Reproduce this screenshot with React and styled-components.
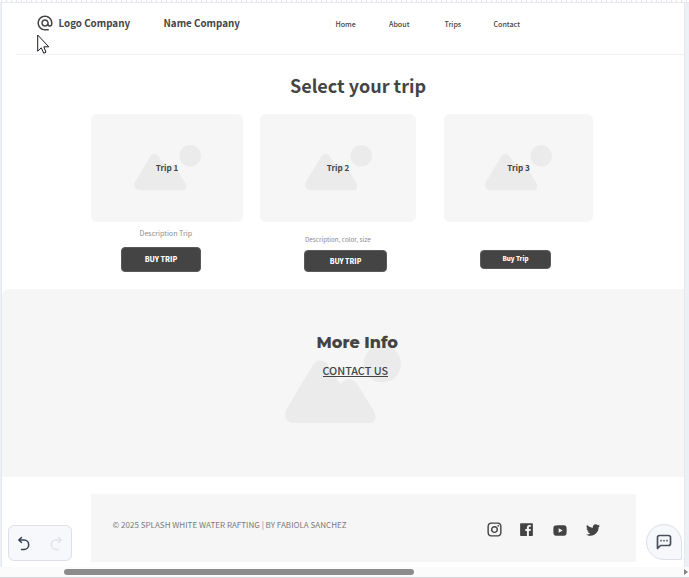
import React from "react";
import styled, { createGlobalStyle, css } from "styled-components";
import { MdAlternateEmail } from "react-icons/md";
import { RiInstagramLine, RiFacebookBoxFill, RiYoutubeFill } from "react-icons/ri";
import { FaTwitter } from "react-icons/fa";

const Global = createGlobalStyle`
  * { box-sizing: border-box; }
  body { margin: 0; overflow: hidden; font-family: "Noto Sans CJK SC", sans-serif; color: #444; }
`;

const Editor = styled.div`
  position: relative;
  width: 689px;
  height: 578px;
  display: grid;
  grid-template-rows: 3px 564px 11px;
  background: #fff;
`;

const Ruler = styled.div`
  border-bottom: 1px solid #e6e6ee;
  background: repeating-linear-gradient(90deg, #fff 0 1px, #e6e6ee 1px 2px, #fff 2px 5px);
`;

const Workspace = styled.div`
  display: grid;
  grid-template-columns: 2px 682px 5px;
  min-height: 0;
`;

const Gutter = styled.div`
  background: #edf0f6;
  border-${(p) => p.$edge}: 1px solid #e4e7ee;
`;

const Page = styled.main`
  display: flex;
  flex-direction: column;
  min-width: 0;
`;

const text = css`
  display: block;
  white-space: nowrap;
  font-size: ${(p) => p.$size}px;
  line-height: 16px;
  letter-spacing: ${(p) => p.$track || 0}px;
`;

const Header = styled.header`
  display: flex;
  align-items: flex-start;
  height: 52px;
  margin-left: 14px;
  padding: 12px 0 0 20px;
  border-bottom: 1px solid #f1f1f1;
`;

const Brand = styled.strong`
  ${text}
  width: ${(p) => p.$width}px;
`;

const AtIcon = styled(MdAlternateEmail)`
  flex: none;
  width: 18px;
  height: 18px;
  margin: -1px 4.5px 0 0;
`;

const Nav = styled.nav`
  display: grid;
  grid-template-columns: 53.5px 55.5px 49px 40px;
  padding-top: 1px;
`;

const NavLink = styled.a`
  ${text}
  font-weight: 500;
`;

const Title = styled.h1`
  ${text}
  margin: 15px 0 0 288px;
  line-height: 30px;
  font-weight: 700;
`;

const Trips = styled.section`
  display: grid;
  grid-template-columns: 152px 156px 149px;
  column-gap: 17px;
  height: 175px;
  margin: 14px 0 0 89px;
`;

const Trip = styled.article`
  display: flex;
  flex-direction: column;
  margin-left: ${(p) => p.$indent}px;
  width: ${(p) => p.$width}px;
`;

const Picture = styled.div`
  display: grid;
  place-items: center;
  height: 107.5px;
  border-radius: 6px;
  background: #f6f6f6;
  > * { grid-area: 1 / 1; }
`;

const Landscape = styled.svg`
  display: block;
  width: ${(p) => p.$width}px;
  fill: #ebebeb;
`;

const TripName = styled.strong`
  ${text}
`;

const Description = styled.p`
  ${text}
  height: 16px;
  margin: ${(p) => p.$top}px 0 0 ${(p) => p.$left}px;
  color: #8b8b8b;
`;

const BuyButton = styled.button`
  ${text}
  width: ${(p) => p.$width}px;
  height: ${(p) => p.$height}px;
  margin: ${(p) => p.$top}px 0 0 ${(p) => p.$left}px;
  padding: 0 0 ${(p) => p.$lift || 0}px;
  border: 1px solid #5a5a5a;
  border-radius: 4px;
  background: #444;
  color: #fff;
  font-family: inherit;
  font-weight: 900;
`;

const MoreInfo = styled.section`
  display: grid;
  grid-template-columns: 283.5px 1fr;
  grid-template-rows: 188px;
  border-top-left-radius: 8px;
  background: #f6f6f6;
  > * { grid-row: 1; }
`;

const InfoArt = styled(Landscape)`
  grid-column: 2;
  margin: 55.5px 0 0 -0.5px;
`;

const InfoText = styled.div`
  grid-column: 2;
  display: flex;
  flex-direction: column;
  align-items: flex-start;
  padding: 44px 0 0 31px;
`;

const InfoTitle = styled.h2`
  ${text}
  margin: 0;
  line-height: 20px;
  font-family: Montserrat, Inter, sans-serif;
  font-weight: 800;
`;

const ContactLink = styled.a`
  ${text}
  margin: 9px 0 0 6px;
  height: 15px;
  border-bottom: 1px solid #444;
  font-weight: 500;
`;

const Footer = styled.footer`
  display: flex;
  justify-content: space-between;
  width: 545px;
  height: 68px;
  margin: 17px 0 0 89px;
  padding: 23px 35px 0 21.5px;
  background: #f6f6f6;
`;

const Copyright = styled.p`
  ${text}
  margin: 0;
  color: #7b7b7b;
`;

const Social = styled.div`
  display: flex;
  gap: 15px;
  padding-top: 4px;
  svg { width: 17px; height: 17px; }
  svg:nth-child(3) { width: 16px; margin: 1px 1px 0 2px; }
  svg:nth-child(4) { width: 14px; height: 16px; margin: 1px 1px 0 2px; }
`;

const ScrollTrack = styled.div`
  display: flex;
  justify-content: space-between;
  align-items: center;
  padding-left: 64px;
  border-bottom: 1px solid #d2d8d8;
  background: #fbfbfb;
`;

const Thumb = styled.div`
  width: 350px;
  height: 6px;
  border-radius: 3px;
  background: #8b8b8b;
`;

const ScrollArrow = styled.svg`
  width: 6px;
  height: 8px;
  fill: #858585;
`;

const History = styled.div`
  position: absolute;
  left: 8px;
  top: 525px;
  display: flex;
  align-items: center;
  justify-content: space-between;
  width: 64px;
  height: 36px;
  padding: 2px 8px 0;
  border: 1px solid #dedfe9;
  border-radius: 6px;
  background: #f7f8fb;
`;

const HistoryIcon = styled.svg`
  width: 14px;
  height: 16px;
  fill: none;
  stroke: ${(p) => (p.$muted ? "#e0e3e9" : "#364152")};
  stroke-width: 1.5;
  stroke-linecap: round;
  stroke-linejoin: round;
`;

const ChatButton = styled.button`
  position: absolute;
  left: 646px;
  top: 524px;
  display: grid;
  place-items: center;
  width: 36px;
  height: 36px;
  padding: 0;
  border: 1px solid #dcdfe7;
  border-radius: 18px 18px 2px 18px;
  background: #f7f8fb;
`;

const Cursor = styled.svg`
  position: absolute;
  left: 37px;
  top: 34px;
  width: 13px;
  height: 21px;
`;

function Mountains({ as: Art = Landscape, width }) {
  return (
    <Art $width={width} viewBox="0 0 116.2 79">
      <circle cx="97.4" cy="18.8" r="18.7" />
      <path d="M11 78.6C1.5 78.6-2 71 2 63.5L27 21.5Q30.5 15.6 35.5 15.6T44 21.5L55.6 39.3Q59.5 34.2 64.2 34.2T72 38.5L89 66Q94.5 78.6 82 78.6Z" />
    </Art>
  );
}

const trips = [
  { name: "Trip 1", width: 152, indent: 0, desc: { text: "Description Trip", $size: 7.1, $top: 3.5, $left: 48.5 },
    buy: { text: "BUY TRIP", $size: 7, $width: 80, $height: 25, $top: 6, $left: 30, $lift: 1 } },
  { name: "Trip 2", width: 156, indent: 0, desc: { text: "Description, color, size", $size: 6.3, $top: 10.5, $left: 45 },
    buy: { text: "BUY TRIP", $size: 6.8, $width: 83, $height: 22, $top: 2, $left: 44 } },
  { name: "Trip 3", width: 149, indent: 11, desc: { text: "", $size: 7, $top: 10.5, $left: 0 },
    buy: { text: "Buy Trip", $size: 6.2, $width: 71, $height: 19, $top: 2, $left: 36, $lift: 2 } },
];

export default function App() {
  return (
    <>
      <Global />
      <Editor>
        <Ruler />
        <Workspace>
          <Gutter $edge="right" />
          <Page>
            <Header>
              <AtIcon />
              <Brand $size={9.8} $width={105}>Logo Company</Brand>
              <Brand $size={9.8} $width={172}>Name Company</Brand>
              <Nav>
                {["Home", "About", "Trips", "Contact"].map((item) => (
                  <NavLink key={item} $size={7.1}>{item}</NavLink>
                ))}
              </Nav>
            </Header>
            <Title $size={18}>Select your trip</Title>
            <Trips>
              {trips.map(({ name, width, indent, desc, buy }) => (
                <Trip key={name} $width={width} $indent={indent}>
                  <Picture>
                    <Mountains width={67} />
                    <TripName $size={8.1}>{name}</TripName>
                  </Picture>
                  <Description {...desc}>{desc.text}</Description>
                  <BuyButton {...buy}>{buy.text}</BuyButton>
                </Trip>
              ))}
            </Trips>
            <MoreInfo>
              <Mountains as={InfoArt} width={116} />
              <InfoText>
                <InfoTitle $size={16}>More Info</InfoTitle>
                <ContactLink $size={10.8}>CONTACT US</ContactLink>
              </InfoText>
            </MoreInfo>
            <Footer>
              <Copyright $size={8.05}>© 2025 SPLASH WHITE WATER RAFTING | BY FABIOLA SANCHEZ</Copyright>
              <Social>
                <RiInstagramLine />
                <RiFacebookBoxFill />
                <RiYoutubeFill />
                <FaTwitter />
              </Social>
            </Footer>
          </Page>
          <Gutter $edge="left" />
        </Workspace>
        <ScrollTrack>
          <Thumb />
          <ScrollArrow viewBox="0 0 6 8"><path d="M1 1 5 4 1 7Z" /></ScrollArrow>
        </ScrollTrack>
        <History>
          <HistoryIcon viewBox="0 0 14 16"><path d="M4.5 1.5 1.8 4 4.5 6.5M2 4H7A4.7 4.7 0 0 1 7 13.4H4.5" /></HistoryIcon>
          <HistoryIcon $muted viewBox="0 0 14 16"><path d="M9.5 1.5 12.2 4 9.5 6.5M12 4H7A4.7 4.7 0 0 0 7 13.4H9.5" /></HistoryIcon>
        </History>
        <ChatButton>
          <svg width="16" height="16" viewBox="0 0 16 16" fill="none" stroke="#4a4f5c" strokeWidth="1.7" strokeLinejoin="round">
            <path d="M1.5 14.5V3.5Q1.5 1.5 3.5 1.5H12.5Q14.5 1.5 14.5 3.5V9.5Q14.5 11.5 12.5 11.5H4.5Z" />
            <path d="M4.3 6.7H5.7M7.3 6.7H8.7M10.3 6.7H11.7" />
          </svg>
        </ChatButton>
        <Cursor viewBox="0 0 13 21">
          <path d="M.7 1V17.2L4.3 13.8 6.7 19.2 9 18.2 6.8 12.8H11.8Z" fill="#fff" stroke="#1c1c28" strokeWidth="1" />
        </Cursor>
      </Editor>
    </>
  );
}
